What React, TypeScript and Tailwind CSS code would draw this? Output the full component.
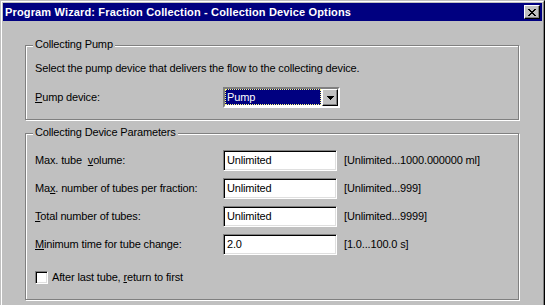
import React from 'react';

const sunken =
  'border border-t-[#808080] border-l-[#808080] border-r-white border-b-white shadow-[inset_1px_1px_0_#000,inset_-1px_-1px_0_#dfdfdf]';

function CloseGlyph() {
  // 8x7 pixel "X" like the classic caption button
  const px = [
    [0, 0], [1, 0], [6, 0], [7, 0],
    [1, 1], [2, 1], [5, 1], [6, 1],
    [2, 2], [3, 2], [4, 2], [5, 2],
    [3, 3], [4, 3],
    [2, 4], [3, 4], [4, 4], [5, 4],
    [1, 5], [2, 5], [5, 5], [6, 5],
    [0, 6], [1, 6], [6, 6], [7, 6],
  ];
  return (
    <svg width="8" height="7" viewBox="0 0 8 7" shapeRendering="crispEdges">
      {px.map(([x, y], i) => (
        <rect key={i} x={x} y={y} width="1" height="1" fill="#000" />
      ))}
    </svg>
  );
}

function GroupBox({ label, className, children }: { label: string; className: string; children: React.ReactNode }) {
  return (
    <div
      className={`relative w-[494px] border border-[#808080] shadow-[1px_1px_0_#fff,inset_1px_1px_0_#fff] ${className}`}
    >
      <span className="absolute left-[7px] top-[-8px] bg-[#c0c0c0] px-[2px] leading-[13px]">{label}</span>
      {children}
    </div>
  );
}

function ParamRow({ label, value, range }: { label: React.ReactNode; value: string; range: string }) {
  return (
    <div className="flex items-center h-[21px]">
      <div className="w-[188px] whitespace-pre">{label}</div>
      <div className={`w-[114px] h-[21px] bg-white flex items-center pl-[3px] ${sunken}`}>{value}</div>
      <div className="ml-[7px]">{range}</div>
    </div>
  );
}

export default function App() {
  return (
    <div className="w-[545px] h-[305px] overflow-hidden bg-[#c0c0c0] font-['Liberation_Sans',Arial,sans-serif] text-[11px] tracking-[-0.15px] text-black">
      <div className="h-[320px] border border-[#c0c0c0] border-r-black border-b-black">
        <div className="h-full border border-white border-r-[#808080] border-b-[#808080] p-[1px]">
          {/* Title bar */}
          <div className="h-[18px] bg-[#000080] flex items-center justify-between pl-[2px] pr-[2px]">
            <span className="text-white font-bold tracking-[0.15px]">
              Program Wizard: Fraction Collection - Collection Device Options
            </span>
            <button className="w-[16px] h-[14px] bg-[#c0c0c0] flex items-center justify-center border border-t-white border-l-white border-r-black border-b-black shadow-[inset_-1px_-1px_0_#808080]">
              <CloseGlyph />
            </button>
          </div>

          <div className="px-[22px] pt-[24px]">
            {/* Collecting Pump */}
            <GroupBox label="Collecting Pump" className="h-[75px] pl-[9px] pt-[16px]">
              <div className="leading-[13px]">Select the pump device that delivers the flow to the collecting device.</div>
              <div className="flex items-center mt-[12px]">
                <div className="w-[188px]">
                  <span className="underline">P</span>ump device:
                </div>
                <div className={`w-[117px] h-[21px] bg-white flex ${sunken} border-[2px] shadow-none`}>
                  <div className="w-[96px] h-[16px] bg-[#000080] border border-dotted border-[#ffff7f] text-white flex items-center pl-[1px]">
                    Pump
                  </div>
                  <div className="ml-[1px] w-[16px] h-[17px] bg-[#c0c0c0] flex items-center justify-center border border-t-white border-l-white border-r-black border-b-black shadow-[inset_-1px_-1px_0_#808080]">
                    <svg width="7" height="4" viewBox="0 0 7 4" shapeRendering="crispEdges">
                      <rect x="0" y="0" width="7" height="1" fill="#000" />
                      <rect x="1" y="1" width="5" height="1" fill="#000" />
                      <rect x="2" y="2" width="3" height="1" fill="#000" />
                      <rect x="3" y="3" width="1" height="1" fill="#000" />
                    </svg>
                  </div>
                </div>
              </div>
            </GroupBox>

            {/* Collecting Device Parameters */}
            <GroupBox label="Collecting Device Parameters" className="h-[167px] mt-[13px] pl-[9px] pt-[16px]">
              <div className="flex flex-col gap-[7px]">
                <ParamRow
                  label={
                    <>
                      Max. tube  <span className="underline">v</span>olume:
                    </>
                  }
                  value="Unlimited"
                  range="[Unlimited...1000.000000 ml]"
                />
                <ParamRow
                  label={
                    <>
                      Ma<span className="underline">x</span>. number of tubes per fraction:
                    </>
                  }
                  value="Unlimited"
                  range="[Unlimited...999]"
                />
                <ParamRow
                  label={
                    <>
                      <span className="underline">T</span>otal number of tubes:
                    </>
                  }
                  value="Unlimited"
                  range="[Unlimited...9999]"
                />
                <ParamRow
                  label={
                    <>
                      <span className="underline">M</span>inimum time for tube change:
                    </>
                  }
                  value="2.0"
                  range="[1.0...100.0 s]"
                />
              </div>
              <div className="flex items-center gap-[4px] mt-[14px]">
                <div className={`w-[13px] h-[13px] bg-white ${sunken}`} />
                <span>
                  After last tube, <span className="underline">r</span>eturn to first
                </span>
              </div>
            </GroupBox>
          </div>
        </div>
      </div>
    </div>
  );
}
